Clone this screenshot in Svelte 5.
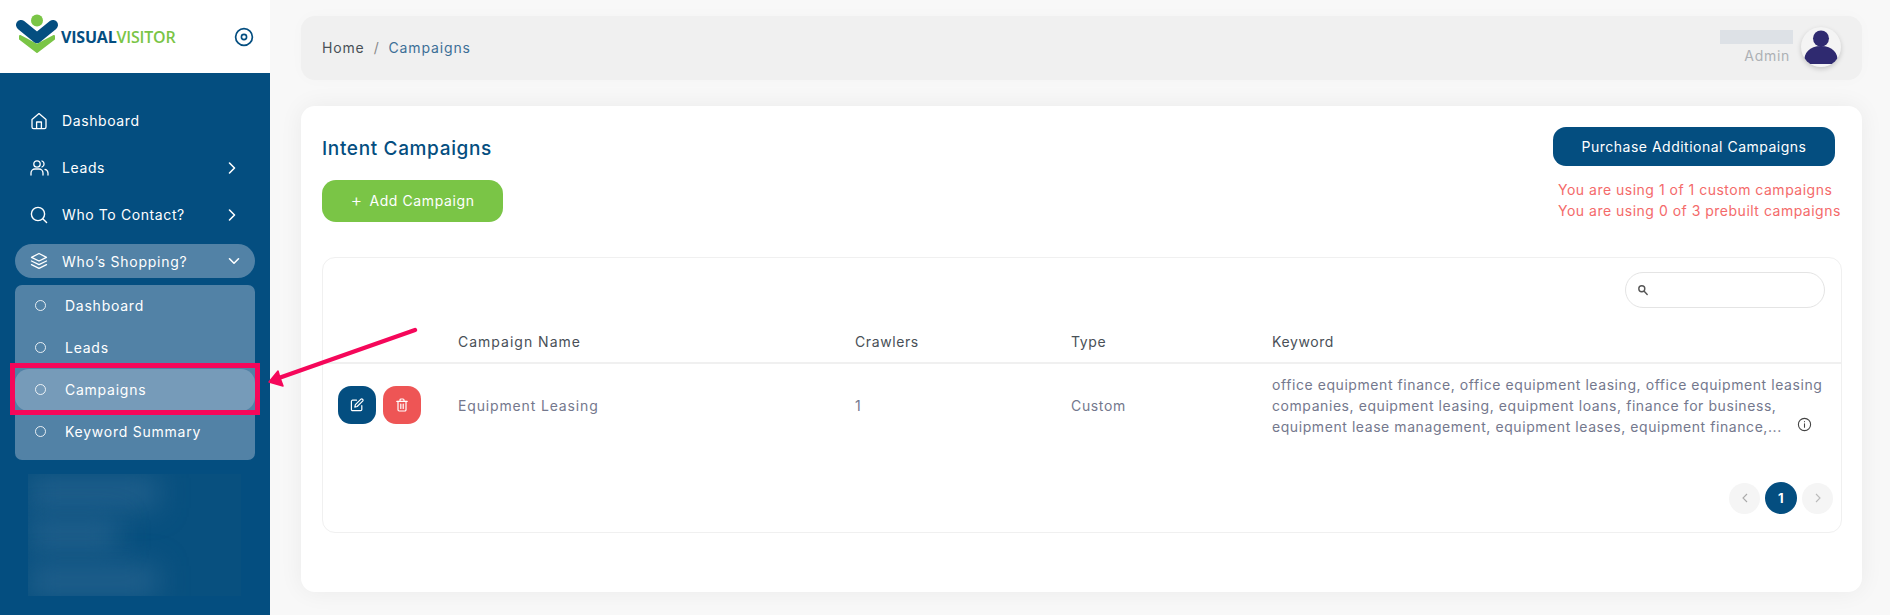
<script>
  const topItems = [
    { label: 'Dashboard', icon: 'home' },
    { label: 'Leads', icon: 'users', arrow: true },
    { label: 'Who To Contact?', icon: 'search', arrow: true }
  ];
  const subItems = [
    { label: 'Dashboard' },
    { label: 'Leads' },
    { label: 'Campaigns', active: true },
    { label: 'Keyword Summary' }
  ];
</script>

<div class="page">
  <aside class="sidebar">
    <div class="brand">
      <svg class="logo-mark" width="44" height="40" viewBox="0 0 44 40">
        <path d="M4 22 L21 31 L38 22 L38 25 L21 38 L4 25 Z" fill="#7ac546" stroke="#7ac546" stroke-width="2" stroke-linejoin="round" />
        <path d="M5 11 L21 24 L37 11" fill="none" stroke="#044e80" stroke-width="10" stroke-linecap="round" stroke-linejoin="round" />
        <circle cx="21" cy="6.500" r="6" fill="#7ac546" />
      </svg>
      <span class="logo-text"><b>VISUAL</b><i>VISITOR</i></span>
      <svg class="collapse" width="20" height="20" viewBox="0 0 20 20" fill="none" stroke="#044e80">
        <circle cx="10" cy="10" r="8.400" stroke-width="1.700" />
        <circle cx="10" cy="10" r="2.600" stroke-width="1.600" />
      </svg>
    </div>
    <nav class="menu">
      {#each topItems as item}
        <div class="item">
          <span class="ico">
            {#if item.icon === 'home'}
              <svg width="18" height="18" viewBox="0 0 18 18" fill="none" stroke="#fff" stroke-width="1.300" stroke-linejoin="round"><path d="M2 7.500 9 1.600l7 5.900V15a1.600 1.600 0 0 1-1.600 1.600H3.600A1.600 1.600 0 0 1 2 15z" /><path d="M6.600 16.600V10h4.800v6.600" /></svg>
            {:else if item.icon === 'users'}
              <svg width="19" height="18" viewBox="0 0 19 18" fill="none" stroke="#fff" stroke-width="1.300" stroke-linecap="round"><circle cx="7" cy="5" r="3.200" /><path d="M1 16v-2a4 4 0 0 1 4-4h4a4 4 0 0 1 4 4v2" /><path d="M12 2a3.200 3.200 0 0 1 0 6" /><path d="M15 10.400a4 4 0 0 1 3 3.600v2" /></svg>
            {:else}
              <svg width="18" height="18" viewBox="0 0 18 18" fill="none" stroke="#fff" stroke-width="1.400" stroke-linecap="round"><circle cx="8" cy="8" r="6.600" /><path d="m13 13 3.600 3.600" /></svg>
            {/if}
          </span>
          <span class="label">{item.label}</span>
          {#if item.arrow}
            <svg class="chev" width="10" height="14" viewBox="0 0 10 14" fill="none" stroke="#fff" stroke-width="1.600" stroke-linecap="round" stroke-linejoin="round"><path d="m2.500 2 5 5-5 5" /></svg>
          {/if}
        </div>
      {/each}
      <div class="item open">
        <span class="ico">
          <svg width="18" height="18" viewBox="0 0 18 18" fill="none" stroke="#fff" stroke-width="1.300" stroke-linejoin="round" stroke-linecap="round"><path d="M9 1.500 1.500 5.300 9 9l7.500-3.700z" /><path d="M1.500 9 9 12.700 16.500 9" /><path d="M1.500 12.600 9 16.400l7.500-3.800" /></svg>
        </span>
        <span class="label">Who’s Shopping?</span>
        <svg class="chev down" width="12" height="10" viewBox="0 0 12 10" fill="none" stroke="#fff" stroke-width="1.600" stroke-linecap="round" stroke-linejoin="round"><path d="m1.500 2.800 4.500 4.400 4.500-4.400" /></svg>
      </div>
      <div class="submenu">
        {#each subItems as sub}
          <div class="sub" class:active={sub.active}>
            <span class="dot"></span>
            <span>{sub.label}</span>
          </div>
        {/each}
      </div>
      <div class="blurred">
        <span class="smear a"></span>
        <span class="smear b"></span>
        <span class="smear c"></span>
      </div>
    </nav>
  </aside>

  <main class="main">
    <header class="topbar">
      <div class="crumbs">
        <span>Home</span>
        <span class="sep">/</span>
        <span class="here">Campaigns</span>
      </div>
      <div class="user">
        <div class="who">
          <span class="name-blur"></span>
          <span class="role">Admin</span>
        </div>
        <span class="avatar">
          <svg width="36" height="36" viewBox="0 0 36 36" fill="#2f2a70"><circle cx="18" cy="9.500" r="8" /><path d="M1.500 33c-1-9 5-16 16.500-16s17.500 7 16.500 16c0 1-1 2-2 2H3.500c-1 0-2-1-2-2z" /></svg>
        </span>
      </div>
    </header>

    <section class="card">
      <div class="card-head">
        <div class="head-left">
          <h2>Intent Campaigns</h2>
          <button class="add"><span class="plus">+</span> Add Campaign</button>
        </div>
        <div class="head-right">
          <button class="purchase">Purchase Additional Campaigns</button>
          <p>You are using 1 of 1 custom campaigns</p>
          <p>You are using 0 of 3 prebuilt campaigns</p>
        </div>
      </div>

      <div class="table-box">
        <div class="search-row">
          <div class="search">
            <svg width="12" height="12" viewBox="0 0 12 12" fill="none" stroke="#555" stroke-width="1.400" stroke-linecap="round"><circle cx="4.800" cy="4.800" r="3" /><path d="m7.200 7.200 3 3.200" /></svg>
          </div>
        </div>
        <table>
          <thead>
            <tr>
              <th class="c-act"></th>
              <th class="c-name">Campaign Name</th>
              <th class="c-crawl">Crawlers</th>
              <th class="c-type">Type</th>
              <th>Keyword</th>
            </tr>
          </thead>
          <tbody>
            <tr>
              <td>
                <div class="actions">
                  <button class="act edit" aria-label="Edit">
                    <svg width="14" height="14" viewBox="0 0 14 14" fill="none" stroke="#fff" stroke-width="1.200" stroke-linecap="round" stroke-linejoin="round"><path d="M6.500 2.200H2.600A1.200 1.200 0 0 0 1.400 3.400v8a1.200 1.200 0 0 0 1.200 1.200h8a1.200 1.200 0 0 0 1.200-1.200V7.500" /><path d="M10.700 1.300a1.200 1.200 0 0 1 1.900 1.800L7.200 8.500l-2.400.6.600-2.400z" /></svg>
                  </button>
                  <button class="act del" aria-label="Delete">
                    <svg width="14" height="14" viewBox="0 0 14 14" fill="none" stroke="#fff" stroke-width="1.200" stroke-linecap="round" stroke-linejoin="round"><path d="M1.800 3.400h10.400" /><path d="M3 3.400v8.400a1.200 1.200 0 0 0 1.200 1.200h5.600a1.200 1.200 0 0 0 1.200-1.200V3.400" /><path d="M5 3.400V2a1 1 0 0 1 1-1h2a1 1 0 0 1 1 1v1.400" /><path d="M5.800 6v4.400M8.200 6v4.400" /></svg>
                  </button>
                </div>
              </td>
              <td class="name">Equipment Leasing</td>
              <td>1</td>
              <td>Custom</td>
              <td class="kw">
                <div class="kw-wrap">
                  <span>office equipment finance, office equipment leasing, office equipment leasing companies, equipment leasing, equipment loans, finance for business, equipment lease management, equipment leases, equipment finance,...</span>
                  <svg class="info" width="15" height="15" viewBox="0 0 14 14" fill="none" stroke="#444" stroke-width="1" stroke-linecap="round"><circle cx="7" cy="7" r="5.700" /><path d="M7 6.400v3.200M7 4.300v.2" /></svg>
                </div>
              </td>
            </tr>
          </tbody>
        </table>
        <div class="pager">
          <span class="pg">
            <svg width="8" height="10" viewBox="0 0 8 10" fill="none" stroke="#aaa" stroke-width="1.100"><path d="M6 1 2 5l4 4" /></svg>
          </span>
          <span class="pg on">1</span>
          <span class="pg">
            <svg width="8" height="10" viewBox="0 0 8 10" fill="none" stroke="#bbb" stroke-width="1.100"><path d="m2 1 4 4-4 4" /></svg>
          </span>
        </div>
      </div>
    </section>
  </main>

  <!-- annotation drawn over the screenshot -->
  <div class="mark-box"></div>
  <svg class="mark-arrow" width="170" height="70" viewBox="0 0 170 70">
    <path d="M148 4 9 53" stroke="#f5075a" stroke-width="4.500" stroke-linecap="round" fill="none" />
    <path d="M2 56 11 45 13 52 16 60z" fill="#f5075a" stroke="#f5075a" stroke-width="1.500" stroke-linejoin="round" />
  </svg>
</div>

<style>
  :global(body) {
    margin: 0;
  }

  .page {
    position: relative;
    display: flex;
    width: 1890px;
    height: 615px;
    overflow: hidden;
    background: #f8f8f8;
    font-family: Inter, 'Open Sans', sans-serif;
    color: #495057;
    letter-spacing: 0.6px;
  }

  .sidebar {
    position: relative;
    z-index: 1;
    width: 270px;
    flex: none;
    background: #044e80;
    display: flex;
    flex-direction: column;
  }

  .brand {
    height: 73px;
    background: #fff;
    display: flex;
    align-items: center;
    padding: 0 16px 0 16px;
    box-sizing: border-box;
  }

  .logo-mark {
    margin-top: -6px;
  }

  .logo-text {
    margin-left: 1px;
    font-family: 'Open Sans', sans-serif;
    font-size: 16px;
    font-weight: 700;
    letter-spacing: -0.2px;
    flex: 1;
  }

  .logo-text b {
    color: #044e80;
    font-weight: 700;
  }

  .logo-text i {
    color: #7ac546;
    font-style: normal;
    font-weight: 600;
  }

  .menu {
    display: flex;
    flex-direction: column;
    padding: 24px 15px 0;
  }

  .item {
    display: flex;
    align-items: center;
    height: 47px;
    padding: 0 15px;
    color: #fff;
    font-size: 14px;
    letter-spacing: 0.6px;
  }

  .ico {
    width: 32px;
    display: flex;
  }

  .label {
    flex: 1;
  }

  .item.open {
    height: 34px;
    margin-top: 6px;
    border-radius: 17px;
    background: #5282a6;
    letter-spacing: 0.75px;
  }

  .chev {
    margin-right: 3px;
  }

  .down {
    margin-right: 0;
  }

  .submenu {
    margin-top: 7px;
    height: 175px;
    border-radius: 7px;
    background: #5282a6;
    display: flex;
    flex-direction: column;
  }

  .sub {
    display: flex;
    align-items: center;
    height: 42px;
    padding: 0 20px 2px;
    box-sizing: border-box;
    color: #fff;
    font-size: 14px;
    letter-spacing: 0.75px;
    border-radius: 14px;
  }

  .sub.active {
    background: #769bb9;
  }

  .dot {
    width: 9px;
    height: 9px;
    border: 1px solid #fff;
    border-radius: 50%;
    margin-right: 19px;
    opacity: 0.85;
  }

  .blurred {
    position: relative;
    overflow: hidden;
    margin: 14px 14px 0 13px;
    height: 122px;
    background: #08507f;
  }

  .smear {
    position: absolute;
    left: 0;
    height: 30px;
    background: #22608c;
    filter: blur(14px);
  }

  .a { top: 4px; width: 130px; }
  .b { top: 46px; width: 90px; }
  .c { top: 92px; width: 130px; }

  .main {
    flex: 1;
    padding: 16px 28px 0 31px;
  }

  .topbar {
    height: 64px;
    display: flex;
    align-items: center;
    justify-content: space-between;
    padding: 0 21px;
    background: #f0f0f0;
    border-radius: 14px;
    box-shadow: 0 0 16px rgba(0, 0, 0, 0.02);
  }

  .crumbs {
    font-size: 14px;
    display: flex;
    gap: 9px;
    color: #495057;
    margin-top: -2px;
    letter-spacing: 0.85px;
  }

  .sep {
    color: #888;
  }

  .here {
    color: #3d6f97;
  }

  .user {
    display: flex;
    align-items: center;
    gap: 8px;
    margin-top: -2px;
  }

  .who {
    display: flex;
    flex-direction: column;
    align-items: flex-end;
    gap: 3px;
  }

  .name-blur {
    width: 73px;
    height: 14px;
    background: #dde1e6;
  }

  .role {
    font-size: 14px;
    letter-spacing: 0.7px;
    color: #adb1b5;
    margin-right: 3px;
  }

  .avatar {
    width: 40px;
    height: 40px;
    border-radius: 50%;
    background: #f4f4f4;
    box-shadow: 0 2px 5px rgba(0, 0, 0, 0.18);
    display: flex;
    align-items: center;
    justify-content: center;
    overflow: hidden;
  }

  .card {
    margin-top: 26px;
    height: 486px;
    box-sizing: border-box;
    padding: 21px 20px 0 21px;
    background: #fff;
    border-radius: 14px;
    box-shadow: 0 0 24px rgba(0, 0, 0, 0.06);
  }

  .card-head {
    display: flex;
    justify-content: space-between;
    height: 130px;
  }

  h2 {
    margin: 0;
    padding-top: 11px;
    font-size: 19px;
    font-weight: 500;
    letter-spacing: 0.65px;
    line-height: 22px;
    color: #044e80;
  }

  button {
    font-family: inherit;
    letter-spacing: inherit;
    border: 0;
  }

  .add {
    display: block;
    margin-top: 20px;
    width: 181px;
    height: 42px;
    padding-bottom: 3px;
    border-radius: 14px;
    background: #7ac546;
    color: #fff;
    font-size: 14px;
  }

  .plus {
    font-size: 18px;
    font-weight: 300;
    vertical-align: -1px;
    margin-right: 2px;
  }

  .head-right {
    width: 284px;
    display: flex;
    flex-direction: column;
    align-items: flex-end;
  }

  .purchase {
    width: 282px;
    height: 39px;
    margin-right: 7px;
    border-radius: 13px;
    background: #044e80;
    color: #fff;
    font-size: 14px;
    letter-spacing: 0.5px;
    flex: none;
  }

  .head-right p {
    margin: 0;
    width: 284px;
    font-size: 14px;
    line-height: 21px;
    letter-spacing: 0.5px;
    color: #f46a6a;
    white-space: nowrap;
  }

  .purchase + p {
    margin-top: 13px;
  }

  .table-box {
    height: 276px;
    box-sizing: border-box;
    border: 1px solid #f0f0f0;
    border-radius: 13px;
    padding-top: 14px;
  }

  .search-row {
    display: flex;
    justify-content: flex-end;
    padding-right: 16px;
  }

  .search {
    width: 200px;
    height: 36px;
    box-sizing: border-box;
    border: 1px solid #e4e4e4;
    border-radius: 18px;
    display: flex;
    align-items: center;
    padding-left: 11px;
  }

  table {
    width: 100%;
    margin-top: 12px;
    border-collapse: collapse;
    table-layout: fixed;
    font-size: 14px;
  }

  th {
    height: 42px;
    padding: 0;
    text-align: left;
    font-weight: 400;
    color: #495057;
    border-bottom: 2px solid #f0f0f0;
  }

  td {
    padding: 0;
    height: 82px;
    color: #74788d;
    letter-spacing: 0.65px;
  }

  .c-act { width: 135px; }
  .c-name { width: 397px; letter-spacing: 1px; }
  .c-crawl { width: 216px; }
  .c-type { width: 201px; }

  td.name {
    letter-spacing: 0.85px;
  }

  .actions {
    display: flex;
    gap: 7px;
    padding-left: 15px;
  }

  .act {
    width: 38px;
    height: 38px;
    padding: 0;
    border-radius: 13px;
    display: flex;
    align-items: center;
    justify-content: center;
  }

  .edit { background: #044e80; }
  .del { background: #ee5555; }

  td.kw {
    letter-spacing: 0.57px;
  }

  .kw-wrap {
    position: relative;
    padding-right: 8px;
    line-height: 21px;
  }

  .info {
    position: absolute;
    right: 29px;
    bottom: 5px;
  }

  .pager {
    display: flex;
    justify-content: flex-end;
    align-items: center;
    gap: 5px;
    padding-right: 8px;
    margin-top: 36px;
  }

  .pg {
    width: 31px;
    height: 31px;
    border-radius: 50%;
    background: #f5f5f5;
    display: flex;
    align-items: center;
    justify-content: center;
  }

  .pg.on {
    width: 32px;
    height: 32px;
    background: #044e80;
    color: #fff;
    font-size: 13px;
    font-weight: 700;
  }

  .mark-box {
    position: absolute;
    z-index: 2;
    left: 10px;
    top: 363px;
    width: 250px;
    height: 52px;
    box-sizing: border-box;
    border: 5px solid #f5075a;
  }

  .mark-arrow {
    position: absolute;
    z-index: 2;
    left: 267px;
    top: 326px;
  }
</style>
